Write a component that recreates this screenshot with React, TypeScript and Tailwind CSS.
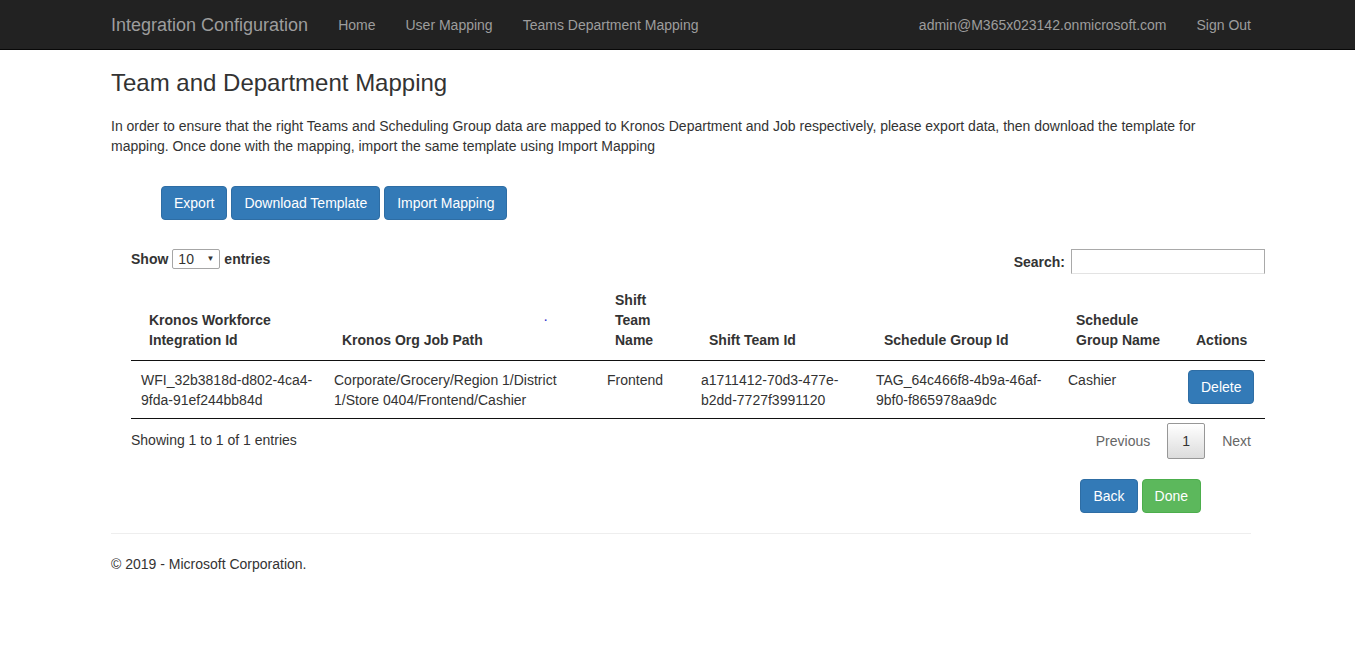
import React from 'react';

const columns = [
  { key: 'wfi', label: ['Kronos Workforce', 'Integration Id'], width: 193 },
  { key: 'path', label: ['Kronos Org Job Path'], width: 273 },
  { key: 'teamName', label: ['Shift', 'Team', 'Name'], width: 94 },
  { key: 'teamId', label: ['Shift Team Id'], width: 175 },
  { key: 'groupId', label: ['Schedule Group Id'], width: 192 },
  { key: 'groupName', label: ['Schedule', 'Group Name'], width: 120 },
  { key: 'actions', label: ['Actions'], width: 87 },
];

const rows = [
  {
    wfi: ['WFI_32b3818d-d802-4ca4-', '9fda-91ef244bb84d'],
    path: ['Corporate/Grocery/Region 1/District', '1/Store 0404/Frontend/Cashier'],
    teamName: ['Frontend'],
    teamId: ['a1711412-70d3-477e-', 'b2dd-7727f3991120'],
    groupId: ['TAG_64c466f8-4b9a-46af-', '9bf0-f865978aa9dc'],
    groupName: ['Cashier'],
  },
];

const btn =
  'inline-flex h-[34px] items-center rounded-[4px] border border-[#2e6da4] bg-[#337ab7] px-3 text-[14px] text-white';

export default function App() {
  return (
    <div className="min-h-[657px] bg-white font-['Liberation_Sans',Arial,sans-serif] text-[14px] leading-5 text-[#333]">
      {/* Navbar */}
      <nav className="h-[50px] border-b border-[#080808] bg-[#222]">
        <div className="ml-[111px] flex h-full w-[1140px] items-center text-[#9d9d9d]">
          <span className="text-[18px]">Integration Configuration</span>
          <ul className="ml-[30px] flex gap-[30px]">
            <li>Home</li>
            <li>User Mapping</li>
            <li>Teams Department Mapping</li>
          </ul>
          <ul className="ml-auto flex gap-[30px]">
            <li>admin@M365x023142.onmicrosoft.com</li>
            <li>Sign Out</li>
          </ul>
        </div>
      </nav>

      <div className="ml-[111px] w-[1140px]">
        <h3 className="pt-[20px] text-[24px] leading-[26px]">Team and Department Mapping</h3>
        <p className="mt-[20px]">
          In order to ensure that the right Teams and Scheduling Group data are mapped to Kronos Department and Job
          respectively, please export data, then download the template for mapping. Once done with the mapping, import
          the same template using Import Mapping
        </p>

        <div className="mt-[30px] flex gap-[4px] pl-[50px]">
          <button className={btn}>Export</button>
          <button className={btn}>Download Template</button>
          <button className={btn}>Import Mapping</button>
        </div>

        {/* Data table */}
        <div className="ml-[20px] mr-[-14px] mt-[29px]">
          <div className="flex items-start justify-between">
            <div className="flex items-center gap-[4px] font-bold">
              <span>Show</span>
              <span className="flex h-[20px] w-[48px] items-center justify-between rounded-[2px] border border-[#a6a6a6] px-[5px] text-[14px] font-normal">
                <span>10</span>
                <span className="text-[8px]">▼</span>
              </span>
              <span>entries</span>
            </div>
            <div className="flex items-center gap-[6px] font-bold">
              <span className="mt-[1px]">Search:</span>
              <span className="h-[25px] w-[194px] border border-[#a9a9a9] border-b-[#e3e3e3]" />
            </div>
          </div>

          <table className="mt-[6px] w-full table-fixed border-collapse">
            <colgroup>
              {columns.map((c) => (
                <col key={c.key} style={{ width: c.width }} />
              ))}
            </colgroup>
            <thead>
              <tr className="border-b border-[#111]">
                {columns.map((c) => (
                  <th key={c.key} className="relative px-[18px] pb-[10px] pt-[10px] text-left align-bottom font-bold">
                    {c.label.map((l) => (
                      <div key={l}>{l}</div>
                    ))}
                    {c.key === 'path' && (
                      <span className="absolute right-[50px] top-[28px] text-[10px] text-[#33c]">.</span>
                    )}
                  </th>
                ))}
              </tr>
            </thead>
            <tbody>
              {rows.map((r, i) => (
                <tr key={i} className="border-b border-[#111]">
                  {columns.map((c) =>
                    c.key === 'actions' ? (
                      <td key={c.key} className="px-[10px] pb-[8px] pt-[9px] align-top">
                        <button className={btn}>Delete</button>
                      </td>
                    ) : (
                      <td key={c.key} className="px-[10px] pb-[8px] pt-[9px] align-top">
                        {(r as Record<string, string[]>)[c.key].map((l) => (
                          <div key={l}>{l}</div>
                        ))}
                      </td>
                    ),
                  )}
                </tr>
              ))}
            </tbody>
          </table>

          <div className="mt-[4px] flex items-center justify-between">
            <span className="mt-[-2px]">Showing 1 to 1 of 1 entries</span>
            <div className="mr-[14px] flex items-center text-[#666]">
              <span className="px-[17px] pb-[1px]">Previous</span>
              <span className="flex h-[36px] w-[38px] items-center justify-center rounded-[2px] border border-[#979797] bg-gradient-to-b from-white to-[#dcdcdc] text-[#333]">
                1
              </span>
              <span className="pl-[17px]">Next</span>
            </div>
          </div>
        </div>

        <div className="mt-[20px] flex justify-end gap-[4px] pr-[50px]">
          <button className={btn + ' px-[12px]'}>Back</button>
          <button className="inline-flex h-[34px] items-center rounded-[4px] border border-[#4cae4c] bg-[#5cb85c] px-3 text-[14px] text-white">
            Done
          </button>
        </div>

        <hr className="mt-[20px] border-t border-[#eee]" />
        <footer className="mt-[20px]">© 2019 - Microsoft Corporation.</footer>
      </div>
    </div>
  );
}
